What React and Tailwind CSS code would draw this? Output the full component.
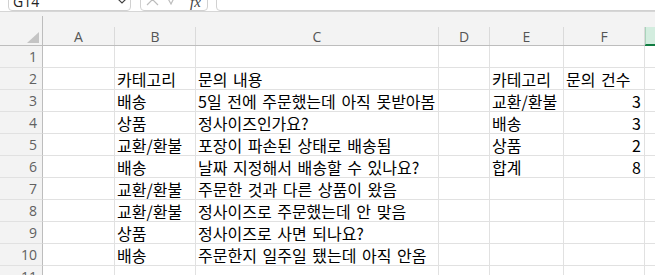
import React from 'react';

const cols = "grid grid-cols-[43px_72px_81px_243px_51px_74px_81px_1fr]";

const rows = [
    ["", "", "", "", "", ""],
    ["", "카테고리", "문의 내용", "", "카테고리", "문의 건수"],
    ["", "배송", "5일 전에 주문했는데 아직 못받아봄", "", "교환/환불", 3],
    ["", "상품", "정사이즈인가요?", "", "배송", 3],
    ["", "교환/환불", "포장이 파손된 상태로 배송됨", "", "상품", 2],
    ["", "배송", "날짜 지정해서 배송할 수 있나요?", "", "합계", 8],
    ["", "교환/환불", "주문한 것과 다른 상품이 왔음", "", "", ""],
    ["", "교환/환불", "정사이즈로 주문했는데 안 맞음", "", "", ""],
    ["", "상품", "정사이즈로 사면 되나요?", "", "", ""],
    ["", "배송", "주문한지 일주일 됐는데 아직 안옴", "", "", ""],
    ["", "", "", "", "", ""],
];

const letters = ["A", "B", "C", "D", "E", "F"];

function TopBar() {
    return (
        <div className="flex items-end h-[11px] overflow-hidden bg-white">
            <div className="ml-[8px] w-[123px] h-[28px] shrink-0 flex items-end justify-between border border-[#d1d1d1] rounded-[4px] pl-[4px] pr-[3px]">
                <span className="leading-[14px] pb-[1px] text-[14px] text-[#242424] font-['Open_Sans',sans-serif]">G14</span>
                <svg width="10" height="7" viewBox="0 0 10 7" className="mb-[5px]">
                    <path d="M1 1 L5 5 L9 1" fill="none" stroke="#424242" strokeWidth="1.2" />
                </svg>
            </div>
            <div className="ml-[9px] w-[68px] h-[28px] shrink-0 flex items-end border border-[#d1d1d1] rounded-[4px] pl-[5px]">
                <svg width="13" height="13" viewBox="0 0 13 13" className="mb-[4px]">
                    <path d="M1 1 L12 12 M12 1 L1 12" fill="none" stroke="#bdbdbd" strokeWidth="1.2" />
                </svg>
                <svg width="14" height="12" viewBox="0 0 14 12" className="ml-[6px] mb-[4px]">
                    <path d="M1 1 L6 10 L13 -4" fill="none" stroke="#bdbdbd" strokeWidth="1.2" />
                </svg>
                <span className="ml-[11px] pb-[1px] leading-[14px] text-[15px] italic text-[#424242] font-['Liberation_Serif',serif]">fx</span>
            </div>
            <div className="ml-[8px] flex-1 h-[28px] border border-[#d1d1d1] rounded-[4px] -mr-[10px]"></div>
        </div>
    );
}

function Header() {
    return (
        <div className={`${cols} h-[35px] bg-[#f3f3f3] border-t border-[#d6d6d6] font-['Open_Sans',sans-serif] text-[14px] text-[#555555]`}>
            <div className="flex flex-col border-b border-[#bdbdbd]">
                <div className="h-[4px]"></div>
                <div className="flex-1 flex items-end justify-end border-r border-[#bdbdbd] pr-[3px] pb-[2px]">
                    <svg width="12" height="11" viewBox="0 0 12 11">
                        <polygon points="12,0 12,11 0,11" fill="#c4c4c4" />
                    </svg>
                </div>
            </div>
            {letters.map((l) => (
                <div key={l} className="flex flex-col border-b border-[#bdbdbd]">
                    <div className="h-[15px]"></div>
                    <div className="flex-1 flex items-center justify-center border-r border-[#dadada] leading-none pt-[1px]">{l}</div>
                </div>
            ))}
            <div className="flex flex-col border-b border-[#107c41]">
                <div className="h-[15px]"></div>
                <div className="flex-1 bg-[#d3eddf] border-l border-[#a9d3bb] border-b border-b-[#107c41]"></div>
            </div>
        </div>
    );
}

function Row({ num, cells }) {
    return (
        <div className={`${cols} h-[22px]`}>
            <div className="flex items-center justify-end pr-[5px] bg-[#f3f3f3] border-r border-r-[#bdbdbd] border-b border-b-[#e1e1e1] font-['Open_Sans',sans-serif] text-[14px] text-[#616161] leading-none">
                {num}
            </div>
            {cells.map((c, i) => (
                <div
                    key={i}
                    className={
                        "flex items-center border-r border-b border-[#e1e1e1] whitespace-nowrap text-[16px] text-black font-['Noto_Sans_CJK_KR',sans-serif] leading-none [word-spacing:2px] pt-[1px] " +
                        (typeof c === "number" ? "justify-end pr-[3px]" : "pl-[2px]")
                    }
                >
                    {c}
                </div>
            ))}
            <div className="border-b border-[#e1e1e1]"></div>
        </div>
    );
}

export default function App() {
    return (
        <div className="w-[655px] h-[275px] overflow-hidden bg-white">
            <TopBar />
            <Header />
            {rows.map((r, i) => (
                <Row key={i} num={i + 1} cells={r} />
            ))}
        </div>
    );
}
